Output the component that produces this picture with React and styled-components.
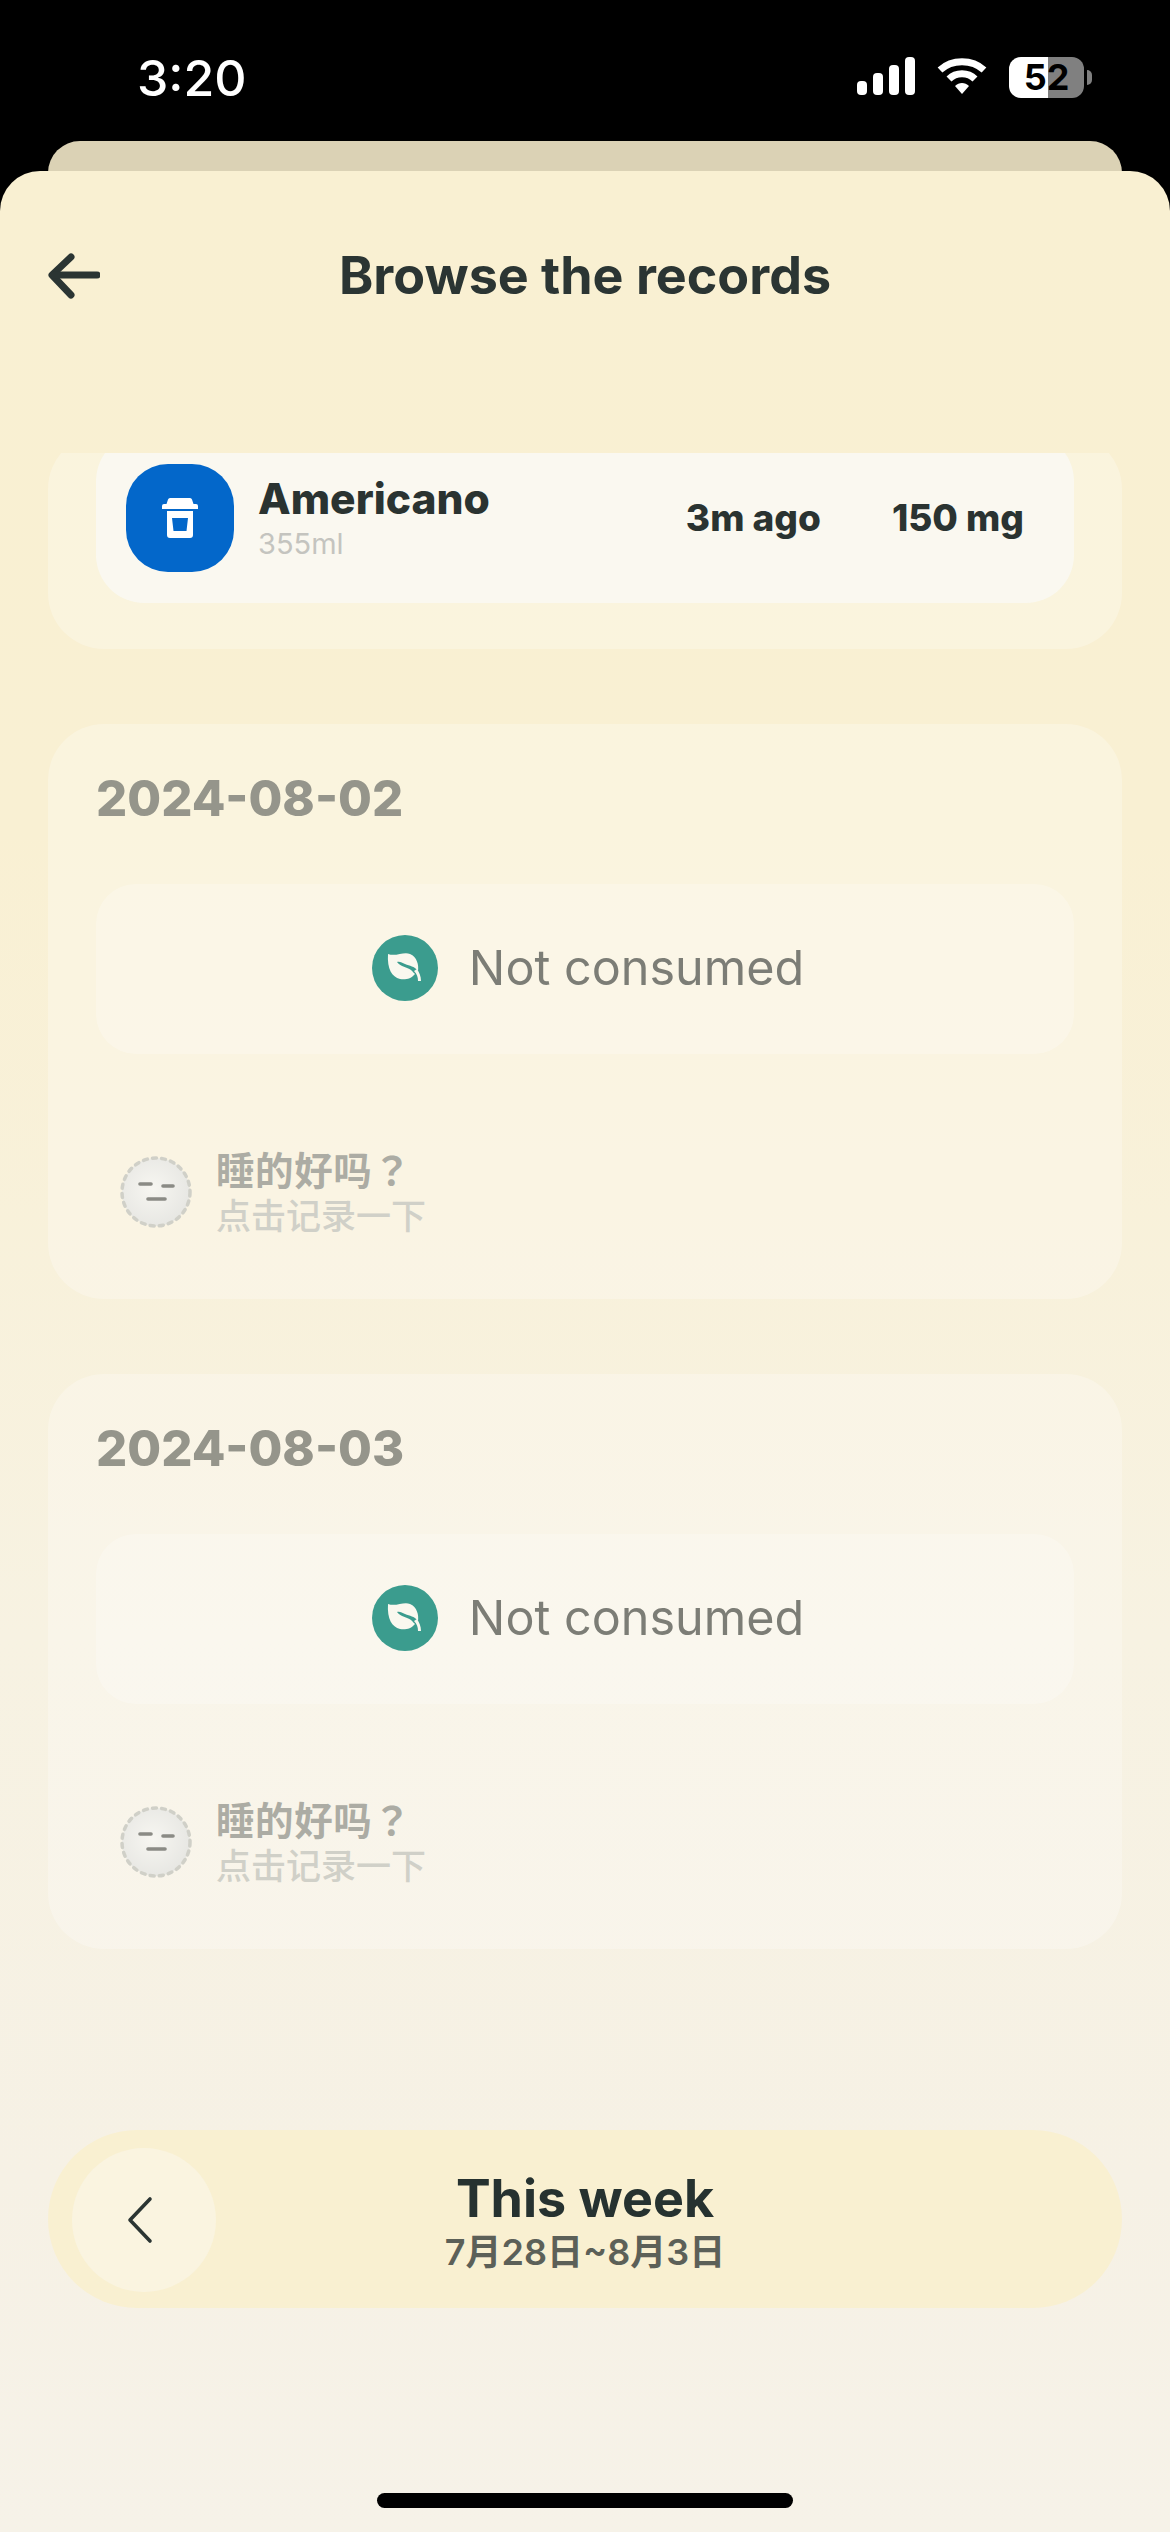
import styled, { createGlobalStyle } from 'styled-components';

const GlobalStyle = createGlobalStyle`
  html, body {
    margin: 0;
    padding: 0;
    background: #000;
  }
  * {
    box-sizing: border-box;
  }
  body {
    font-family: Inter, "Noto Sans CJK SC", sans-serif;
  }
`;

const Page = styled.div`
  width: 1170px;
  height: 2532px;
  overflow: hidden;
  display: flex;
  flex-direction: column;
  background: #000;
`;

const StatusBar = styled.div`
  height: 141px;
  flex-shrink: 0;
  display: flex;
  justify-content: space-between;
  padding: 50px 86px 0 137px;
  color: #fff;
`;

const Clock = styled.div`
  font-size: 50px;
  line-height: 56px;
  font-weight: 500;
`;

const StatusIcons = styled.div`
  display: flex;
  align-items: flex-start;
  gap: 22px;
  padding-top: 7px;
`;

const Battery = styled.div`
  position: relative;
  width: 75px;
  height: 41px;
  border-radius: 12px;
  background: linear-gradient(90deg, #fff 0 52%, #808080 52% 100%);
  color: #000;
  font-size: 36px;
  line-height: 41px;
  font-weight: 700;
  text-align: center;
  &::after {
    content: '';
    position: absolute;
    right: -8px;
    top: 13px;
    width: 5px;
    height: 15px;
    border-radius: 0 8px 8px 0;
    background: #808080;
  }
`;

const BackSheet = styled.div`
  height: 60px;
  flex-shrink: 0;
  margin: 0 48px;
  border-radius: 32px 32px 0 0;
  background: #dbd2b5;
`;

const Sheet = styled.div`
  flex: 1;
  margin-top: -30px;
  position: relative;
  display: flex;
  flex-direction: column;
  border-radius: 40px 40px 0 0;
  background: linear-gradient(180deg, #f9f0d2 0%, #f9f0d3 28%, #f7f2e2 62%, #f6f1e5 85%, #f6f2e8 100%);
`;

const Header = styled.div`
  height: 60px;
  margin-top: 75px;
  position: relative;
  display: flex;
  align-items: center;
  justify-content: center;
`;

const BackButton = styled.div`
  position: absolute;
  left: 48px;
  top: 7px;
  display: flex;
`;

const Title = styled.h1`
  margin: 0;
  font-size: 52px;
  line-height: 60px;
  font-weight: 650;
  color: #2b3533;
`;

const ScrollArea = styled.div`
  height: 1677px;
  margin-top: 147px;
  overflow: hidden;
  flex-shrink: 0;
`;

const List = styled.div`
  margin-top: -20px;
  padding: 0 48px;
  display: flex;
  flex-direction: column;
  gap: 75px;
`;

const DayCard = styled.section`
  padding: ${(p) => (p.$flush ? '0 48px 46px' : '45px 48px 71px')};
  border-radius: 56px;
  background: rgba(255, 255, 255, 0.26);
`;

const DateLabel = styled.div`
  font-size: 49px;
  line-height: 60px;
  font-weight: 800;
  color: #95958b;
  margin-bottom: 55px;
`;

const DrinkRow = styled.div`
  height: 170px;
  display: flex;
  align-items: center;
  padding: 0 50px 0 30px;
  border-radius: 48px;
  background: rgba(250, 250, 245, 0.75);
`;

const DrinkIcon = styled.div`
  width: 108px;
  height: 108px;
  flex-shrink: 0;
  border-radius: 42px;
  background: #0367ca;
  display: flex;
  align-items: center;
  justify-content: center;
`;

const DrinkInfo = styled.div`
  flex: 1;
  margin-left: 24px;
  display: flex;
  flex-direction: column;
`;

const DrinkName = styled.div`
  font-size: 42.5px;
  line-height: 50px;
  font-weight: 800;
  color: #2a3331;
`;

const DrinkVolume = styled.div`
  font-size: 29px;
  line-height: 36px;
  color: #c4c4bf;
  margin-top: 2px;
`;

const DrinkStat = styled.div`
  font-size: 37px;
  line-height: 44px;
  font-weight: 800;
  color: #2a3331;
  margin-left: 71px;
`;

const EmptyRow = styled.div`
  height: 170px;
  display: flex;
  align-items: center;
  justify-content: center;
  gap: 31px;
  padding: 0 0 3px 6px;
  border-radius: 40px;
  background: rgba(255, 255, 255, 0.24);
  font-size: 48.5px;
  color: #7c7d76;
`;

const LeafBadge = styled.div`
  width: 66px;
  height: 66px;
  border-radius: 50%;
  background: #3b9c8e;
  display: flex;
`;

const SleepRow = styled.div`
  margin: 102px 0 0 24px;
  height: 72px;
  display: flex;
  align-items: center;
  gap: 24px;
`;

const SleepText = styled.div`
  display: flex;
  flex-direction: column;
  font-family: "Noto Sans CJK TC", sans-serif;
`;

const SleepTitle = styled.div`
  font-size: 38.5px;
  line-height: 46px;
  font-weight: 700;
  letter-spacing: 0.6px;
  color: #acaca4;
  margin-top: -2px;
`;

const SleepHint = styled.div`
  font-size: 35px;
  line-height: 46px;
  font-weight: 500;
  color: #d0d0c8;
`;

const WeekBar = styled.div`
  height: 178px;
  margin: 0 48px;
  position: relative;
  display: flex;
  align-items: center;
  border-radius: 89px;
  background: #f9f0d1;
`;

const PrevButton = styled.div`
  position: absolute;
  left: 24px;
  top: 18px;
  width: 144px;
  height: 144px;
  padding-right: 8px;
  border-radius: 50%;
  background: #faf4e0;
  display: flex;
  align-items: center;
  justify-content: center;
`;

const WeekText = styled.div`
  width: 100%;
  padding-top: 5px;
  display: flex;
  flex-direction: column;
  align-items: center;
`;

const WeekTitle = styled.div`
  font-size: 52px;
  line-height: 60px;
  font-weight: 700;
  color: #263230;
`;

const WeekRange = styled.div`
  font-size: 36px;
  line-height: 46px;
  font-weight: 600;
  color: #5c6058;
`;

const HomeIndicator = styled.div`
  width: 416px;
  height: 15px;
  margin: 185px auto 0;
  border-radius: 8px;
  background: #000;
`;

const SignalIcon = () => (
  <svg width="58" height="38" viewBox="0 0 58 38" fill="#fff">
    <rect x="0" y="24" width="10" height="14" rx="4" />
    <rect x="16" y="16" width="10" height="22" rx="4" />
    <rect x="32" y="8" width="10" height="30" rx="4" />
    <rect x="48" y="0" width="10" height="38" rx="4" />
  </svg>
);

const WifiIcon = () => (
  <svg width="50" height="38" viewBox="0 0 50 38" fill="none">
    <path d="M3 13 C15 2 35 2 47 13" stroke="#fff" strokeWidth="7" />
    <path d="M12 22 C19 15 31 15 38 22" stroke="#fff" strokeWidth="7" />
    <path d="M18 29 C22 25 28 25 32 29 L25 37 Z" fill="#fff" />
  </svg>
);

const ArrowIcon = () => (
  <svg width="52" height="46" viewBox="0 0 52 46" fill="none" stroke="#2b3533" strokeWidth="7" strokeLinecap="round" strokeLinejoin="round">
    <path d="M23 4 L4 22 L23 42" />
    <path d="M5 22 H49" />
  </svg>
);

const CupIcon = () => (
  <svg width="36" height="41" viewBox="0 0 36 41" fill="#fff">
    <path d="M6 1.5 Q6.5 0 8 0 H28 Q29.5 0 30 1.5 L31.5 6 H34 Q36 6 36 8 V11 H0 V8 Q0 6 2 6 H4.5 Z" />
    <path fillRule="evenodd" d="M5 13 H31 V37 Q31 40 28 40 H8 Q5 40 5 37 Z M10 20 L11.5 33 H24.5 L26 20 Z" />
  </svg>
);

const LeafIcon = () => (
  <svg width="66" height="66" viewBox="0 0 66 66">
    <path d="M16 19 C24 22 32 16 38 19 C45 22 47 30 46 36 C42 31 38 31 33 29 C30 28 28 26 25 27 C29 32 35 32 39 35 C41 37 42 38 43 39 C39 44 33 45 28 44 C20 42 15 34 16 19 Z" fill="#faf8ef" />
    <path d="M42 36 C45 39 46 42 46 46 L49 46 C49 41 47 37 45 34 Z" fill="#faf8ef" />
  </svg>
);

const FaceIcon = () => (
  <svg width="72" height="72" viewBox="0 0 72 72" fill="none">
    <defs>
      <radialGradient id="faceFill" cx="0.45" cy="0.45" r="0.6">
        <stop offset="0" stopColor="#f7f6f1" />
        <stop offset="1" stopColor="#e6e6e2" />
      </radialGradient>
    </defs>
    <circle cx="36" cy="36" r="34" fill="url(#faceFill)" stroke="#d0d0c8" strokeWidth="3.5" strokeDasharray="4 5.2" strokeLinecap="round" />
    <g stroke="#8b8b85" strokeWidth="3.6" strokeLinecap="round">
      <path d="M20 28 H31" />
      <path d="M43 30 H53" />
      <path d="M28 43 H45" />
    </g>
  </svg>
);

const ChevronIcon = () => (
  <svg width="26" height="48" viewBox="0 0 26 48" fill="none" stroke="#2b3533" strokeWidth="3.6" strokeLinecap="round" strokeLinejoin="round">
    <path d="M23 3 L3 24 L23 45" />
  </svg>
);

const emptyDays = ['2024-08-02', '2024-08-03'];

export default function App() {
  return (
    <Page>
      <GlobalStyle />
      <StatusBar>
        <Clock>3:20</Clock>
        <StatusIcons>
          <SignalIcon />
          <WifiIcon />
          <Battery>52</Battery>
        </StatusIcons>
      </StatusBar>
      <BackSheet />
      <Sheet>
        <Header>
          <BackButton>
            <ArrowIcon />
          </BackButton>
          <Title>Browse the records</Title>
        </Header>
        <ScrollArea>
          <List>
            <DayCard $flush>
              <DrinkRow>
                <DrinkIcon>
                  <CupIcon />
                </DrinkIcon>
                <DrinkInfo>
                  <DrinkName>Americano</DrinkName>
                  <DrinkVolume>355ml</DrinkVolume>
                </DrinkInfo>
                <DrinkStat>3m ago</DrinkStat>
                <DrinkStat>150 mg</DrinkStat>
              </DrinkRow>
            </DayCard>
            {emptyDays.map((day) => (
              <DayCard key={day}>
                <DateLabel>{day}</DateLabel>
                <EmptyRow>
                  <LeafBadge>
                    <LeafIcon />
                  </LeafBadge>
                  Not consumed
                </EmptyRow>
                <SleepRow>
                  <FaceIcon />
                  <SleepText>
                    <SleepTitle>睡的好吗？</SleepTitle>
                    <SleepHint>点击记录一下</SleepHint>
                  </SleepText>
                </SleepRow>
              </DayCard>
            ))}
          </List>
        </ScrollArea>
        <WeekBar>
          <PrevButton>
            <ChevronIcon />
          </PrevButton>
          <WeekText>
            <WeekTitle>This week</WeekTitle>
            <WeekRange>7月28日~8月3日</WeekRange>
          </WeekText>
        </WeekBar>
        <HomeIndicator />
      </Sheet>
    </Page>
  );
}
